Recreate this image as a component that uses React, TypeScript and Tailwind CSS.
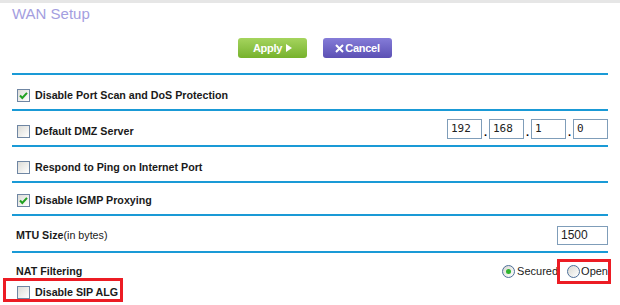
import type { ReactNode } from 'react'

const LINE = 'h-[2px] bg-[#1a9ad6]'

function Check({ on }: { on?: boolean }) {
  return (
    <span className="w-[13px] h-[13px] shrink-0 border border-[#6f86a3] bg-gradient-to-br from-[#dcdcd7] to-[#ffffff] flex items-center justify-center">
      {on && (
        <svg width="11" height="11" viewBox="0 0 11 11">
          <polyline points="2,5.5 4.3,8 9,2.8" fill="none" stroke="#21a121" strokeWidth="2" />
        </svg>
      )}
    </span>
  )
}

function Radio({ on }: { on?: boolean }) {
  return (
    <span className="w-[13px] h-[13px] shrink-0 rounded-full border border-[#4d6f99] bg-gradient-to-br from-[#d8d8d2] to-[#ffffff] flex items-center justify-center">
      {on && <span className="w-[5px] h-[5px] rounded-full bg-[#2fb52f]" />}
    </span>
  )
}

function CheckLabel({ on, children }: { on?: boolean; children: ReactNode }) {
  return (
    <div className="flex items-center gap-[5px] pl-[5px] h-[13px]">
      <Check on={on} />
      <span className="text-[10.7px] leading-[13px] font-bold text-[#1a1a1a]">{children}</span>
    </div>
  )
}

const IP = ['192', '168', '1', '0']

export default function App() {
  return (
    <div className="w-[620px] h-[305px] bg-white overflow-hidden relative font-['Liberation_Sans',Arial,sans-serif]">
      <div className="h-[3px] bg-[#e6e6e6]" />
      <div className="pl-[12px] pt-[2px] text-[15px] leading-[18px] text-[#a49ee0]">WAN Setup</div>

      <div className="flex pl-[238px] gap-[16px] mt-[15px]">
        <button className="w-[69px] h-[20px] rounded-[3px] bg-gradient-to-b from-[#a5d45d] to-[#76b22b] text-white text-[11px] font-bold flex items-center justify-center gap-[4px] tracking-[-0.3px]">
          Apply
          <svg width="6" height="8" viewBox="0 0 6 8">
            <polygon points="0,0 6,4 0,8" fill="white" />
          </svg>
        </button>
        <button className="w-[69px] h-[20px] rounded-[3px] bg-gradient-to-b from-[#857cd8] to-[#5c50b4] text-white text-[11px] font-bold flex items-center justify-center gap-[1px] tracking-[-0.3px]">
          <svg width="9" height="9" viewBox="0 0 9 9">
            <path d="M1 1 L8 8 M8 1 L1 8" stroke="white" strokeWidth="2" />
          </svg>
          Cancel
        </button>
      </div>

      <div className="mx-[12px] mt-[15px]">
        <div className={LINE} />
        <div className="h-[34px] pt-[14px]">
          <CheckLabel on>Disable Port Scan and DoS Protection</CheckLabel>
        </div>
        <div className={LINE} />
        <div className="h-[34px] flex items-start justify-between">
          <div className="mt-[14px]">
            <CheckLabel>Default DMZ Server</CheckLabel>
          </div>
          <div className="mt-[8px] flex items-end">
            {IP.map((v, i) => (
              <div key={i} className="flex items-end">
                {i > 0 && <span className="w-[7px] text-center text-[11px] leading-[14px] font-bold">.</span>}
                <div className="w-[35px] h-[20px] border border-[#7f9db9] pl-[3px] text-[11px] leading-[18px] font-['DejaVu_Sans_Mono',monospace] text-[#222]">
                  {v}
                </div>
              </div>
            ))}
          </div>
        </div>
        <div className={LINE} />
        <div className="h-[34px] pt-[14px]">
          <CheckLabel>Respond to Ping on Internet Port</CheckLabel>
        </div>
        <div className={LINE} />
        <div className="h-[31px] pt-[11px]">
          <CheckLabel on>Disable IGMP Proxying</CheckLabel>
        </div>
        <div className={LINE} />
        <div className="h-[35px] pt-[10px]">
          <div className="h-[19px] flex items-center justify-between">
            <span className="pl-[4px] text-[10.7px] text-[#1a1a1a]">
              <span className="font-bold">MTU Size</span>(in bytes)
            </span>
            <div className="w-[51px] h-[19px] border border-[#7f9db9] pl-[3px] text-[12px] leading-[17px] text-[#222]">
              1500
            </div>
          </div>
        </div>
        <div className={LINE} />
        <div className="mt-[9px] h-[19px] flex items-center justify-between">
          <span className="pl-[4px] text-[10.7px] font-bold text-[#1a1a1a]">NAT Filtering</span>
          <div className="flex items-center text-[11px] text-[#1a1a1a]">
            <Radio on />
            <span className="ml-[2px]">Secured</span>
            <span className="ml-[9px]">
              <Radio />
            </span>
            <span className="ml-[1px]">Open</span>
          </div>
        </div>
        <div className="mt-[5px]">
          <CheckLabel>Disable SIP ALG</CheckLabel>
        </div>
      </div>

      <div className="absolute left-[3px] top-[278px] w-[120px] h-[24px] border-[3px] border-[#ec1c24] pointer-events-none" />
      <div className="absolute left-[557px] top-[259px] w-[54px] h-[25px] border-[3px] border-[#ec1c24] pointer-events-none" />
    </div>
  )
}
